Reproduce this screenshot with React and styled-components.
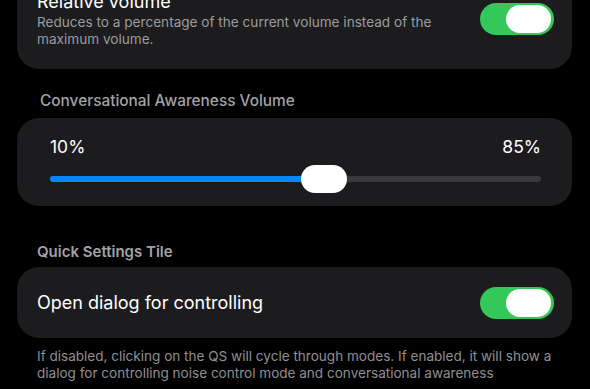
import React from "react";
import styled, { createGlobalStyle } from "styled-components";

const GlobalStyle = createGlobalStyle`
  html, body {
    margin: 0;
    padding: 0;
    background: #000;
    overflow: hidden;
  }
  body {
    font-family: Inter, "Noto Sans", sans-serif;
    color: #fff;
  }
`;

const Screen = styled.div`
  width: 590px;
  height: 389px;
  overflow: hidden;
  background: #000;
`;

// content is scrolled a little, the first card starts above the viewport
const Scroller = styled.div`
  display: flex;
  flex-direction: column;
  padding: 0 18px 0 17px;
  margin-top: -33px;
`;

const Card = styled.div`
  background: #1c1c1e;
  border-radius: 22px;
  padding: ${(p) => p.$pad || "20px 18px 20px 20px"};
  display: flex;
  align-items: center;
  gap: 16px;
`;

const TextCol = styled.div`
  flex: 1;
  display: flex;
  flex-direction: column;
  padding: ${(p) => p.$pad || 0};
`;

const Title = styled.div`
  font-size: 18px;
  line-height: 24px;
  color: #fff;
`;

const Subtitle = styled.div`
  font-size: 13.6px;
  line-height: 17px;
  color: #9b9b9f;
`;

const SectionLabel = styled.div`
  font-size: 15.4px;
  line-height: 20px;
  font-weight: ${(p) => (p.$bold ? 600 : 500)};
  font-size: ${(p) => (p.$bold ? 15 : 15.4)}px;
  color: #a2a2a6;
  padding-left: ${(p) => p.$inset || 20}px;
  margin: ${(p) => p.$margin};
`;

const Footnote = styled.div`
  font-size: 13.55px;
  line-height: 17px;
  color: #8f8f94;
  padding: 10px 0 0 20px;
`;

const SwitchTrack = styled.div`
  flex: none;
  width: 74px;
  height: 32px;
  border-radius: 16px;
  background: #34c759;
  box-sizing: border-box;
  padding: 2px 3px;
  display: flex;
  justify-content: ${(p) => (p.$on ? "flex-end" : "flex-start")};
`;

const SwitchKnob = styled.div`
  width: 45px;
  height: 28px;
  border-radius: 14px;
  background: #fff;
`;

const SliderCard = styled.div`
  background: #1c1c1e;
  border-radius: 22px;
  padding: 19px 31px 13px 33px;
  display: flex;
  flex-direction: column;
  gap: 8px;
`;

const SliderLabels = styled.div`
  display: flex;
  justify-content: space-between;
  font-size: 17.5px;
  line-height: 20px;
  color: #fff;
`;

const SliderArea = styled.div`
  position: relative;
  height: 28px;
  display: flex;
  align-items: center;
`;

const Track = styled.div`
  width: 100%;
  height: 6px;
  border-radius: 3px;
  background: #3a3a3c;
  overflow: hidden;
`;

const Fill = styled.div`
  height: 100%;
  background: #0a84ff;
`;

const Thumb = styled.div`
  position: absolute;
  top: 0;
  width: 46px;
  height: 28px;
  border-radius: 14px;
  background: #fff;
  transform: translateX(-50%);
`;

function Switch({ on }) {
  return (
    <SwitchTrack $on={on}>
      <SwitchKnob />
    </SwitchTrack>
  );
}

function RangeSlider({ min, max, value }) {
  const pct = ((value - min) / (max - min)) * 100;
  return (
    <SliderCard>
      <SliderLabels>
        <span>{min}%</span>
        <span>{max}%</span>
      </SliderLabels>
      <SliderArea>
        <Track>
          <Fill style={{ width: `${pct}%` }} />
        </Track>
        <Thumb style={{ left: `${pct}%` }} />
      </SliderArea>
    </SliderCard>
  );
}

export default function App() {
  return (
    <Screen>
      <GlobalStyle />
      <Scroller>
        <Card $pad="23px 18px 21px 20px">
          <TextCol>
            <Title>Relative volume</Title>
            <Subtitle>
              Reduces to a percentage of the current volume instead of the
              maximum volume.
            </Subtitle>
          </TextCol>
          <Switch on />
        </Card>

        <SectionLabel $inset={23} $margin="22px 0 7px">
          Conversational Awareness Volume
        </SectionLabel>
        <RangeSlider min={10} max={85} value={51.8} />

        <SectionLabel $bold $margin="36px 0 5px">
          Quick Settings Tile
        </SectionLabel>
        <Card $pad="20px 18px 19px 20px">
          <TextCol>
            <Title>Open dialog for controlling</Title>
          </TextCol>
          <Switch on />
        </Card>
        <Footnote>
          If disabled, clicking on the QS will cycle through modes. If enabled,
          it will show a dialog for controlling noise control mode and
          conversational awareness
        </Footnote>
      </Scroller>
    </Screen>
  );
}
